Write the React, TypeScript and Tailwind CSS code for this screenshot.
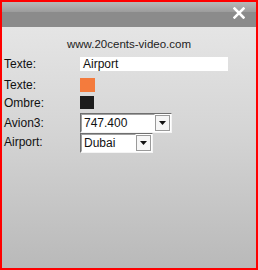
import React from "react";

const font = { fontFamily: '"Liberation Sans", Arial, sans-serif' };

const Arrow = () => (
  <svg width="7" height="4" viewBox="0 0 7 4">
    <polygon points="0,0 7,0 3.5,4" fill="#111" />
  </svg>
);

const Select = ({ value, width }: { value: string; width: string }) => (
  <div
    className={`flex h-[20px] ${width} items-stretch border border-t-[#6f6f6f] border-l-[#6f6f6f] border-r-[#f4f4f4] border-b-[#f4f4f4] bg-white`}
  >
    <div className="flex flex-1 items-center border border-t-[#a0a0a0] border-l-[#a0a0a0] border-r-transparent border-b-transparent pl-[2px] text-[12px] leading-[14px] text-[#111]">
      {value}
    </div>
    <div className="my-px mr-px flex w-[15px] items-center justify-center border border-[#9a9a9a] bg-[#f6f6f6]">
      <Arrow />
    </div>
  </div>
);

export default function App() {
  return (
    <div
      className="flex h-[270px] w-[258px] flex-col border-2 border-[#f00] bg-gradient-to-b from-[#e9e9e9] via-[#d4d4d4] to-[#b9b9b9]"
      style={font}
    >
      {/* title bar */}
      <div className="flex h-[25px] flex-col">
        <div className="h-[10px] bg-gradient-to-b from-[#b8b8b8] to-[#9c9c9c]" />
        <div className="h-[15px] bg-[#8b8b8b]" />
      </div>
      <div className="pointer-events-none -mt-[21px] flex h-[21px] justify-end pr-[11px]">
        <svg width="12" height="12" viewBox="0 0 12 12" className="mt-[1px]">
          <path d="M1.5 1.5 L10.5 10.5 M10.5 1.5 L1.5 10.5" stroke="#fff" strokeWidth="2.5" strokeLinecap="square" />
        </svg>
      </div>

      <div className="mt-[10px] text-center text-[11.5px] leading-[14px] text-[#222]">
        www.20cents-video.com
      </div>

      <div className="mt-[6px] flex h-[14px] items-center pl-[2px] text-[12px] leading-[14px] text-[#111]">
        <div className="w-[76px]">Texte:</div>
        <div className="flex h-[14px] w-[148px] items-center bg-white pl-[3px]">Airport</div>
      </div>

      <div className="mt-[7px] flex h-[14px] items-center pl-[2px] text-[12px] leading-[14px] text-[#111]">
        <div className="w-[76px]">Texte:</div>
        <div className="h-[14px] w-[15px] bg-[#f47b3d]" />
      </div>

      <div className="mt-[4px] flex h-[13px] items-center pl-[2px] text-[12px] leading-[14px] text-[#111]">
        <div className="w-[76px]">Ombre:</div>
        <div className="h-[13px] w-[14px] bg-[#1c1c1c]" />
      </div>

      <div className="mt-[4px] flex h-[20px] items-center pl-[2px] text-[12px] leading-[14px] text-[#111]">
        <div className="w-[76px]">Avion3:</div>
        <Select value="747.400" width="w-[92px]" />
      </div>

      <div className="flex h-[20px] items-center pl-[2px] text-[12px] leading-[14px] text-[#111]">
        <div className="-mt-[3px] w-[76px]">Airport:</div>
        <Select value="Dubai" width="w-[73px]" />
      </div>
    </div>
  );
}
